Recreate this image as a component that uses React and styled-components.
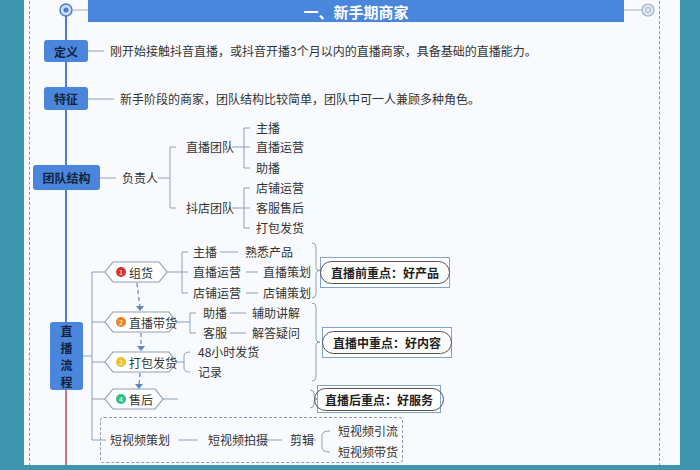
import React from "react";
import styled, { createGlobalStyle } from "styled-components";

const Global = createGlobalStyle`
  html, body { margin: 0; padding: 0; background: #3d95ae; }
  body { font-family: "Noto Sans CJK SC", "Noto Sans", sans-serif; }
`;

const Card = styled.div`
  margin-left: 24px;
  width: 656px;
  height: 465px;
  background: #f8fafd;
  position: relative;
  overflow: hidden;
`;

const DashFrame = styled.div`
  position: absolute;
  left: 5px;
  top: -4px;
  width: 629px;
  height: 480px;
  border-left: 1.5px dashed #8a96a6;
  border-right: 1.5px dashed #8a96a6;
`;

const Canvas = styled.div`
  position: absolute;
  left: -24px;
  top: 0;
  width: 700px;
  height: 470px;
`;

const Node = styled.div`
  position: absolute;
  left: ${p => p.x}px;
  top: ${p => p.y}px;
  transform: translateY(-50%);
  white-space: nowrap;
  font-size: 12px;
  color: #333;
  line-height: 1;
`;

const TitleBar = styled.div`
  position: absolute;
  left: 88px;
  top: 0;
  width: 536px;
  height: 22px;
  background: #4a86dc;
  color: #fff;
  font-size: 15px;
  font-weight: 700;
  display: flex;
  align-items: center;
  justify-content: center;
`;

const Tag = styled.div`
  position: absolute;
  left: ${p => p.x}px;
  top: ${p => p.y}px;
  width: ${p => p.w}px;
  height: ${p => p.h}px;
  background: #4a86dc;
  color: #14233d;
  border-radius: 3px;
  font-size: 12px;
  font-weight: 700;
  display: flex;
  align-items: center;
  justify-content: center;
  text-align: center;
  line-height: 17px;
`;

const Hex = styled.div`
  position: absolute;
  left: ${p => p.x}px;
  top: ${p => p.y - 11}px;
  width: ${p => p.w}px;
  height: 22px;
  display: flex;
  align-items: center;
  padding-left: 11px;
  box-sizing: border-box;
  gap: 3px;
  font-size: 12px;
  color: #333;
  white-space: nowrap;
`;

const Num = styled.span`
  flex: none;
  width: 10px;
  height: 10px;
  border-radius: 50%;
  background: ${p => p.c};
  color: #fff;
  font-size: 7px;
  display: inline-flex;
  align-items: center;
  justify-content: center;
`;

const Focus = styled.div`
  position: absolute;
  left: ${p => p.x}px;
  top: ${p => p.y}px;
  width: ${p => p.w}px;
  height: ${p => p.h}px;
  border: 1.5px solid #7fa3d6;
  box-sizing: border-box;
  display: flex;
  align-items: center;
  justify-content: center;
  background: #fff;
`;

const Pill = styled.div`
  border: 1.5px solid #555;
  border-radius: 12px;
  padding: 2px 10px;
  font-size: 12px;
  font-weight: 700;
  color: #222;
  white-space: nowrap;
`;

const DashBox = styled.div`
  position: absolute;
  left: 100px;
  top: 417px;
  width: 303px;
  height: 46px;
  border: 1.5px dashed #8a9ab2;
  border-radius: 4px;
  box-sizing: border-box;
`;

const hexPath = (x, y, w) =>
  `M${x + 8},${y - 10} L${x + w - 8},${y - 10} L${x + w},${y} L${x + w - 8},${y + 10} L${x + 8},${y + 10} L${x},${y} Z`;

const brace = (x, y1, y2, dir = 1) => {
  const m = (y1 + y2) / 2;
  const d = 4 * dir;
  return `M${x},${y1} q${d},0 ${d},4 L${x + d},${m - 3} q0,3 ${d},3 q${-d},0 ${-d},3 L${x + d},${y2 - 4} q0,4 ${-d},4`;
};

const fork = (x0, y0, xs, ys) => {
  const top = Math.min(...ys);
  const bot = Math.max(...ys);
  let d = `M${x0},${y0} L${xs},${y0} M${xs},${top} L${xs},${bot}`;
  ys.forEach(y => (d += ` M${xs},${y} L${xs + 6},${y}`));
  return d;
};

const Lines = () => (
  <svg width="700" height="470" style={{ position: "absolute", left: 0, top: 0 }}>
    <path d="M66,10 L66,322" fill="none" stroke="#4a7fcf" strokeWidth="2" />
    <path d="M66,390 L66,470" stroke="#c24b4b" strokeWidth="1.5" />
    <circle cx="66" cy="10" r="6" fill="#cfdcf0" stroke="#4a7fcf" strokeWidth="1.5" />
    <circle cx="66" cy="10" r="2.5" fill="#4a7fcf" />
    <path d="M72,10 L88,10 M624,10 L642,10" stroke="#aab" strokeWidth="1" />
    <circle cx="648" cy="10" r="6" fill="#e4eaf2" stroke="#9fb0c8" strokeWidth="1.2" />
    <circle cx="648" cy="10" r="2.5" fill="none" stroke="#9fb0c8" />
    <g fill="none" stroke="#8ea0b8" strokeWidth="1">
      <path d="M88,51 L104,51 M88,99 L114,99 M100,178 L116,178" />
      <path d={fork(158, 178, 170, [147, 208])} />
      <path d={fork(232, 147, 244, [128, 147, 168])} />
      <path d={fork(232, 208, 244, [188, 208, 228])} />
      <path d="M83,356 L92,356 M92,272 L92,440" />
      {[272, 322, 362, 399].map(y => (
        <path key={y} d={`M92,${y} L105,${y}`} />
      ))}
      <path d="M92,440 L106,440" />
      <path d={fork(167, 272, 182, [252, 272, 293])} />
      <path d="M220,252 L238,252 M246,272 L258,272 M246,293 L258,293" />
      <path d={fork(176, 322, 190, [313, 333])} />
      <path d="M230,313 L246,313 M230,333 L246,333" />
      <path d="M177,362 L184,362 M190,352 q-6,0 -6,4 L184,368 q0,4 6,4" />
      <path d="M163,399 L178,399" />
      <path d="M178,440 L198,440 M264,440 L282,440 M308,440 L316,440" />
      <path d="M330,431 q-8,0 -8,4 L322,448 q0,4 8,4" />
      <path d={brace(312, 243, 298)} />
      <path d={brace(312, 303, 381)} />
      <path d={brace(310, 390, 408)} />
    </g>
    <g fill="#fff" stroke="#8ea0b8" strokeWidth="1.2">
      <path d={hexPath(105, 272, 62)} />
      <path d={hexPath(105, 322, 72)} />
      <path d={hexPath(105, 362, 72)} />
      <path d={hexPath(105, 399, 58)} />
    </g>
    <g stroke="#5b85c4" strokeWidth="1.2" strokeDasharray="4 3" fill="none">
      <path d="M137,283 L140,307 M141,333 L141,347 M140,373 L139,384" />
    </g>
    <g fill="#5b85c4">
      <path d="M136,306 L144,306 L140,311 Z M137,346 L145,346 L141,351 Z M135,384 L143,384 L139,389 Z" />
    </g>
  </svg>
);

export default function App() {
  return (
    <>
      <Global />
      <Card>
        <DashFrame />
        <Canvas>
          <Lines />
          <TitleBar>一、新手期商家</TitleBar>
          <Tag x={44} y={40} w={44} h={22}>定义</Tag>
          <Node x={110} y={51}>刚开始接触抖音直播，或抖音开播3个月以内的直播商家，具备基础的直播能力。</Node>
          <Tag x={44} y={87} w={44} h={23}>特征</Tag>
          <Node x={120} y={99}>新手阶段的商家，团队结构比较简单，团队中可一人兼顾多种角色。</Node>
          <Tag x={33} y={165} w={67} h={25}>团队结构</Tag>
          <Node x={122} y={178}>负责人</Node>
          <Node x={186} y={147}>直播团队</Node>
          <Node x={186} y={208}>抖店团队</Node>
          <Node x={256} y={128}>主播</Node>
          <Node x={256} y={147}>直播运营</Node>
          <Node x={256} y={168}>助播</Node>
          <Node x={256} y={188}>店铺运营</Node>
          <Node x={256} y={208}>客服售后</Node>
          <Node x={256} y={228}>打包发货</Node>

          <Tag x={50} y={322} w={33} h={68}>直<br />播<br />流<br />程</Tag>
          <Hex x={105} y={272} w={62}><Num c="#d9312b">1</Num>组货</Hex>
          <Hex x={105} y={322} w={72}><Num c="#e8832a">2</Num>直播带货</Hex>
          <Hex x={105} y={362} w={72}><Num c="#f0be2e">3</Num>打包发货</Hex>
          <Hex x={105} y={399} w={58}><Num c="#2fbf8a">4</Num>售后</Hex>

          <Node x={193} y={252}>主播</Node>
          <Node x={245} y={252}>熟悉产品</Node>
          <Node x={193} y={272}>直播运营</Node>
          <Node x={263} y={272}>直播策划</Node>
          <Node x={193} y={293}>店铺运营</Node>
          <Node x={263} y={293}>店铺策划</Node>
          <Node x={203} y={313}>助播</Node>
          <Node x={252} y={313}>辅助讲解</Node>
          <Node x={203} y={333}>客服</Node>
          <Node x={252} y={333}>解答疑问</Node>
          <Node x={198} y={352}>48小时发货</Node>
          <Node x={198} y={372}>记录</Node>

          <Focus x={320} y={257} w={130} h={31}><Pill>直播前重点：好产品</Pill></Focus>
          <Focus x={322} y={327} w={130} h={31}><Pill>直播中重点：好内容</Pill></Focus>
          <Focus x={317} y={385} w={124} h={28}><Pill>直播后重点：好服务</Pill></Focus>

          <DashBox />
          <Node x={110} y={440}>短视频策划</Node>
          <Node x={208} y={440}>短视频拍摄</Node>
          <Node x={290} y={440}>剪辑</Node>
          <Node x={338} y={431}>短视频引流</Node>
          <Node x={338} y={452}>短视频带货</Node>
        </Canvas>
      </Card>
    </>
  );
}
